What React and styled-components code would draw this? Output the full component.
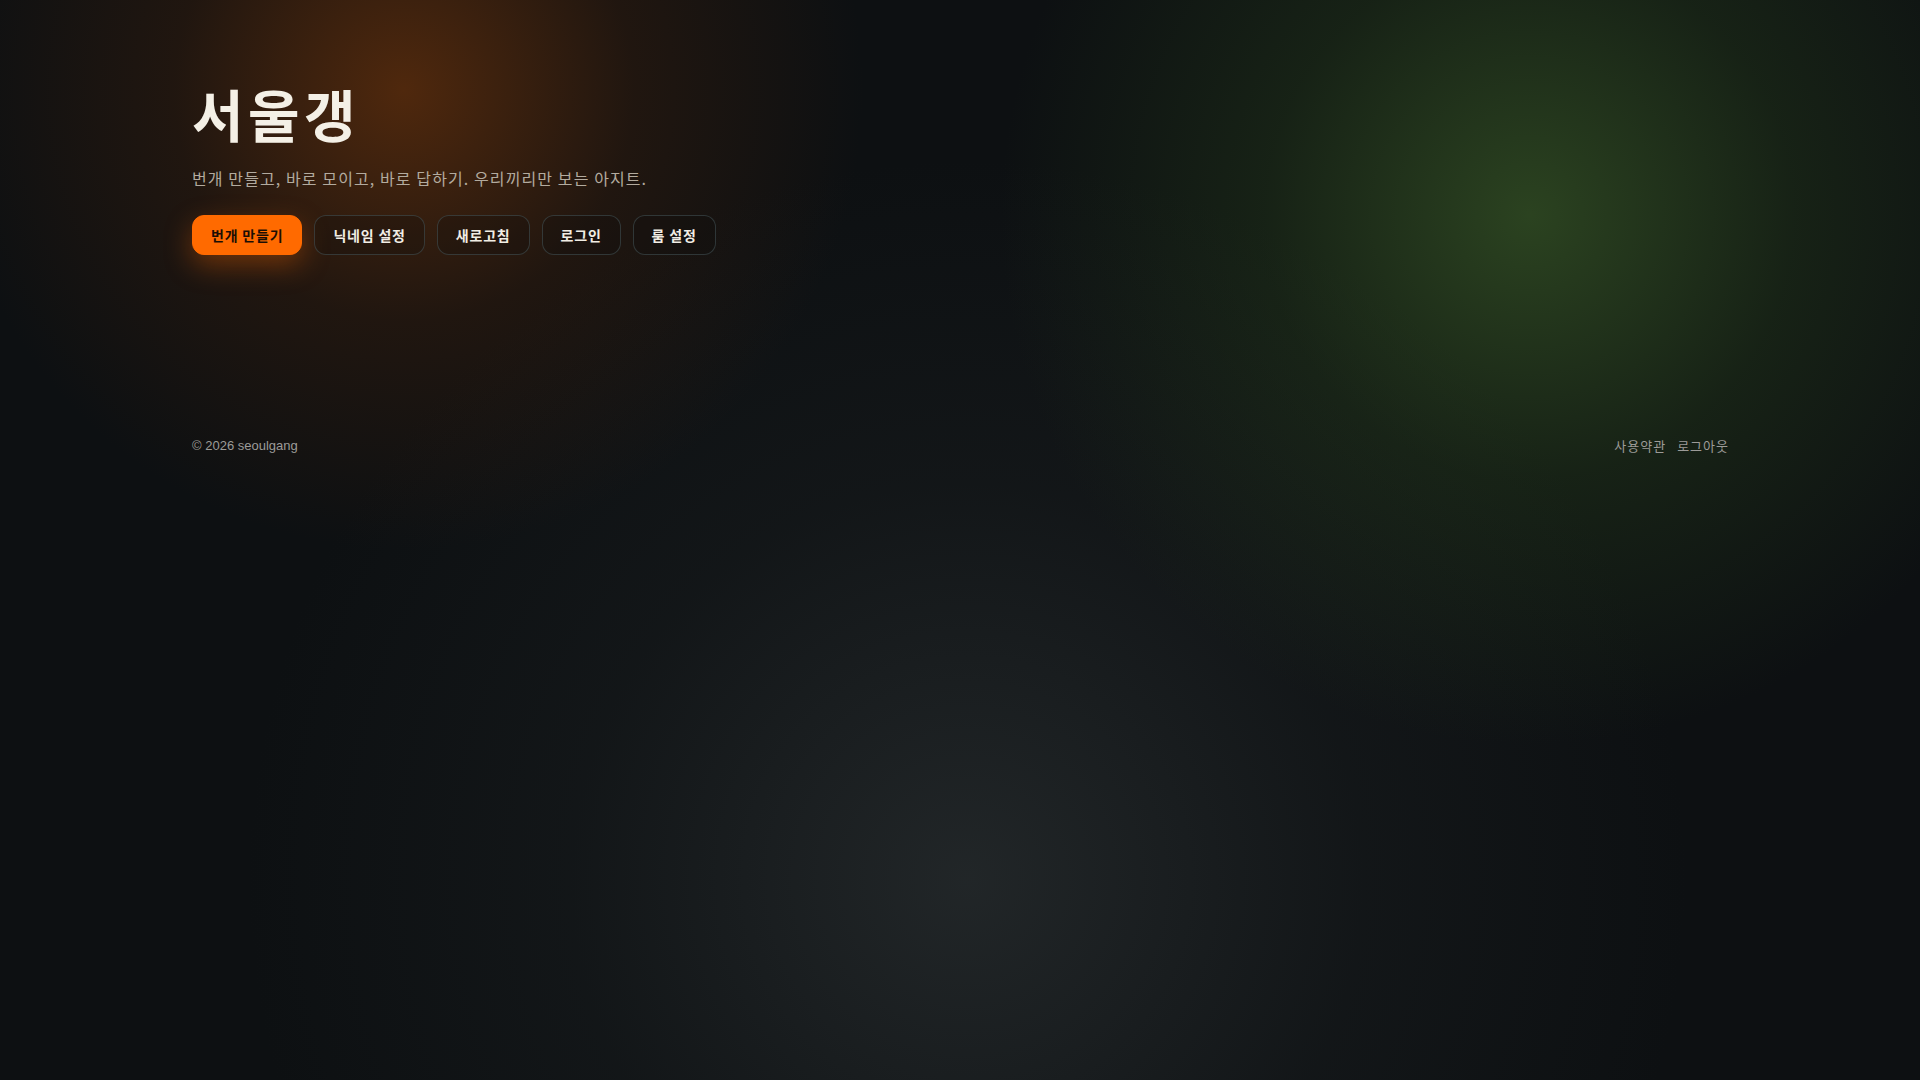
import React from "react";
import styled, { createGlobalStyle } from "styled-components";

const Global = createGlobalStyle`
  html, body { margin: 0; padding: 0; }
  body {
    background: #0d1012;
    font-family: "Liberation Sans", "Noto Sans CJK KR", sans-serif;
    color: #f3efe6;
  }
  * { box-sizing: border-box; }
`;

const Page = styled.div`
  position: relative;
  min-height: 1080px;
  width: 100%;
  overflow: hidden;
  background:
    radial-gradient(circle 460px at 404px 90px, rgba(120, 55, 10, 0.62), rgba(90, 40, 8, 0.25) 50%, rgba(0,0,0,0) 100%),
    radial-gradient(circle 530px at 1530px 215px, rgba(60, 95, 40, 0.64), rgba(45, 75, 30, 0.3) 50%, rgba(0,0,0,0) 100%),
    radial-gradient(circle 720px at 967px 880px, rgba(50, 56, 58, 0.55), rgba(35, 40, 42, 0.25) 55%, rgba(0,0,0,0) 100%),
    #0d1012;
`;

const Container = styled.div`
  width: 1536px;
  margin: 0 auto;
  display: flex;
  flex-direction: column;
`;

const Hero = styled.section`
  display: flex;
  flex-direction: column;
  padding-top: 82px;
  min-height: 432px;
`;

const Title = styled.h1`
  margin: 0;
  font-family: "Noto Sans CJK KR", sans-serif;
  font-size: 56px;
  font-weight: 700;
  line-height: 62px;
  letter-spacing: 4.5px;
  color: #f4f0e6;
`;

const Subtitle = styled.p`
  margin: 21px 0 0;
  font-family: "Noto Sans CJK KR", sans-serif;
  font-size: 16px;
  line-height: 26px;
  letter-spacing: 1.1px;
  color: #b3ab9f;
`;

const Actions = styled.div`
  display: flex;
  gap: 12px;
  margin-top: 24px;
`;

const Button = styled.button`
  height: 40px;
  padding: 0 18px;
  border-radius: 12px;
  font-family: "Noto Sans CJK KR", sans-serif;
  font-size: 14px;
  font-weight: 700;
  letter-spacing: 0.8px;
  cursor: pointer;
  display: inline-flex;
  align-items: center;
  justify-content: center;
  border: 1px solid ${p => (p.$primary ? "#ff6a00" : "rgba(70, 86, 90, 0.55)")};
  background: ${p => (p.$primary ? "#ff6a00" : "rgba(10, 12, 13, 0.25)")};
  color: ${p => (p.$primary ? "#1c0e04" : "#f1ede4")};
  box-shadow: ${p => (p.$primary ? "0 10px 28px rgba(255, 106, 0, 0.35)" : "none")};
`;

const Footer = styled.footer`
  display: flex;
  justify-content: space-between;
  align-items: center;
  height: 26px;
  font-size: 13px;
  color: #9c9b98;
`;

const Links = styled.nav`
  display: flex;
  gap: 11px;
`;

const Link = styled.a`
  font-family: "Noto Sans CJK KR", sans-serif;
  font-size: 13px;
  letter-spacing: 1px;
  color: #9c9b98;
  text-decoration: none;
  &:last-child { margin-right: -1px; }
`;

export default function App() {
  return (
    <>
      <Global />
      <Page>
        <Container>
          <Hero>
            <Title>서울갱</Title>
            <Subtitle>번개 만들고, 바로 모이고, 바로 답하기. 우리끼리만 보는 아지트.</Subtitle>
            <Actions>
              <Button $primary>번개 만들기</Button>
              <Button>닉네임 설정</Button>
              <Button>새로고침</Button>
              <Button>로그인</Button>
              <Button>룸 설정</Button>
            </Actions>
          </Hero>
          <Footer>
            <span>© 2026 seoulgang</span>
            <Links>
              <Link href="#">사용약관</Link>
              <Link href="#">로그아웃</Link>
            </Links>
          </Footer>
        </Container>
      </Page>
    </>
  );
}
